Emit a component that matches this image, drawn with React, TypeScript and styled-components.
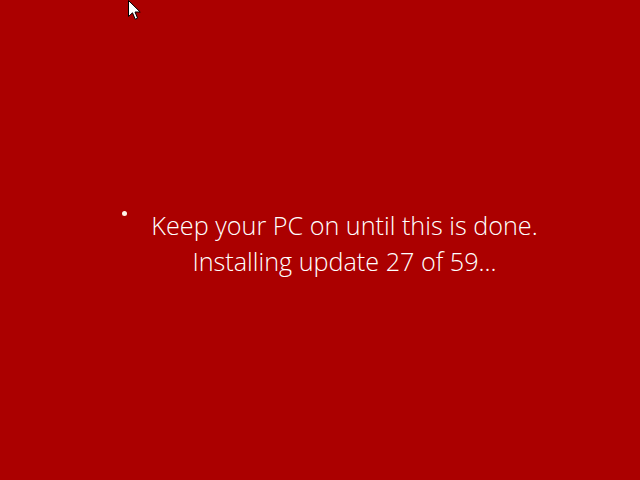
import styled, { createGlobalStyle } from "styled-components";

const GlobalStyle = createGlobalStyle`
    html, body {
        margin: 0;
        padding: 0;
        height: 100%;
        overflow: hidden;
    }

    #root {
        height: 100%;
    }
`;

export const Screen = styled.div`
    position: relative;
    width: 100%;
    height: 100%;
    background-color: #ab0000;
    display: flex;
    justify-content: center;
    align-items: center;
    padding-left: 20px;
    box-sizing: border-box;
    font-family: "Open Sans", "Noto Sans", sans-serif;
`;

export const Stage = styled.div`
    display: flex;
    align-items: flex-start;
    gap: 24px;
    margin-top: 6px;
`;

export const SpinnerDot = styled.span`
    width: 5px;
    height: 5px;
    margin-top: 4px;
    border-radius: 50%;
    background: #fff4ea;
    flex: none;
`;

export const Message = styled.div`
    display: flex;
    flex-direction: column;
    align-items: center;
`;

export const Line = styled.p`
    margin: 0;
    font-size: 25.2px;
    font-weight: 300;
    line-height: 36px;
    color: #ffffff;
    white-space: nowrap;
`;

export const Pointer = styled.svg`
    position: absolute;
    left: 128px;
    top: 0;
`;

export default function App() {
    return (
        <>
            <GlobalStyle />
            <Screen>
                <Pointer width="14" height="21" viewBox="0 0 14 21">
                    <path
                        d="M0.5 0.5 L0.5 16.5 L4.5 12.8 L7.2 19.2 L9.6 18.2 L7 12 L12.2 12 Z"
                        fill="#fff"
                        stroke="#000"
                        strokeWidth="1"
                        strokeLinejoin="miter"
                    />
                </Pointer>
                <Stage>
                    <SpinnerDot />
                    <Message>
                        <Line>Keep your PC on until this is done.</Line>
                        <Line>Installing update 27 of 59...</Line>
                    </Message>
                </Stage>
            </Screen>
        </>
    );
}
